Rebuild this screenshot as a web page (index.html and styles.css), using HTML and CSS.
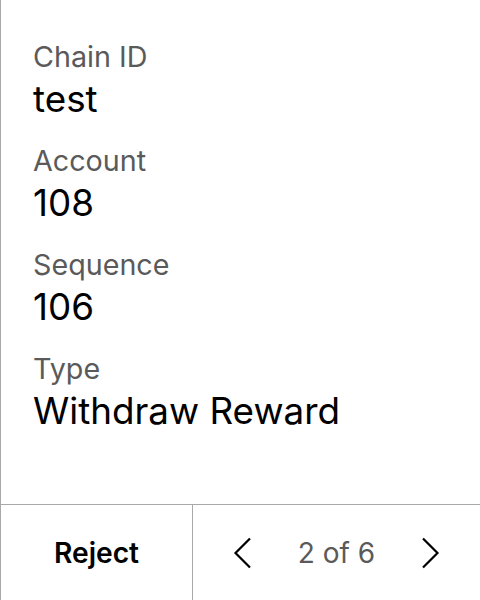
FILE: index.html
```html
<!DOCTYPE html>
<html>
<head>
<meta charset="utf-8">
<link rel="stylesheet" href="styles.css">
</head>
<body>
<div class="screen">
  <div class="details">
    <div class="field"><div class="label">Chain ID</div><div class="value">test</div></div>
    <div class="field"><div class="label">Account</div><div class="value">108</div></div>
    <div class="field"><div class="label">Sequence</div><div class="value">106</div></div>
    <div class="field"><div class="label">Type</div><div class="value">Withdraw Reward</div></div>
  </div>
  <div class="footer">
    <div class="reject">Reject</div>
    <div class="pager">
      <svg class="chev" width="20" height="32" viewBox="0 0 20 32"><path d="M17 1.5 L2.5 16 L17 30.5" fill="none" stroke="#000" stroke-width="2.2"/></svg>
      <span class="count">2 of 6</span>
      <svg class="chev" width="20" height="32" viewBox="0 0 20 32"><path d="M3 1.5 L17.5 16 L3 30.5" fill="none" stroke="#000" stroke-width="2.2"/></svg>
    </div>
  </div>
</div>
</body>
</html>
```
FILE: styles.css
```css
html, body { margin: 0; padding: 0; background: #fff; }
body { font-family: Inter, "Noto Sans", sans-serif; }
.screen {
  width: 480px; height: 600px; box-sizing: border-box;
  border-left: 1px solid #a8a8a8;
  display: flex; flex-direction: column;
}
.details { flex: 1; padding: 40px 0 0 32px; display: flex; flex-direction: column; gap: 23px; }
.field { display: flex; flex-direction: column; }
.label { font-size: 28.7px; line-height: 34px; color: #5a5a5a; }
.value { font-size: 36.8px; line-height: 44px; color: #000; margin-top: 3px; }
.footer { height: 96px; border-top: 1px solid #a8a8a8; display: flex; box-sizing: border-box; }
.reject { width: 191px; border-right: 1px solid #a8a8a8; display: flex; align-items: center; justify-content: center; font-size: 28.2px; font-weight: 600; color: #000; }
.pager { flex: 1; display: flex; align-items: center; justify-content: space-between; padding: 0 40px 0 40px; }
.count { font-size: 28px; color: #5a5a5a; }
.chev { display: block; }
```
